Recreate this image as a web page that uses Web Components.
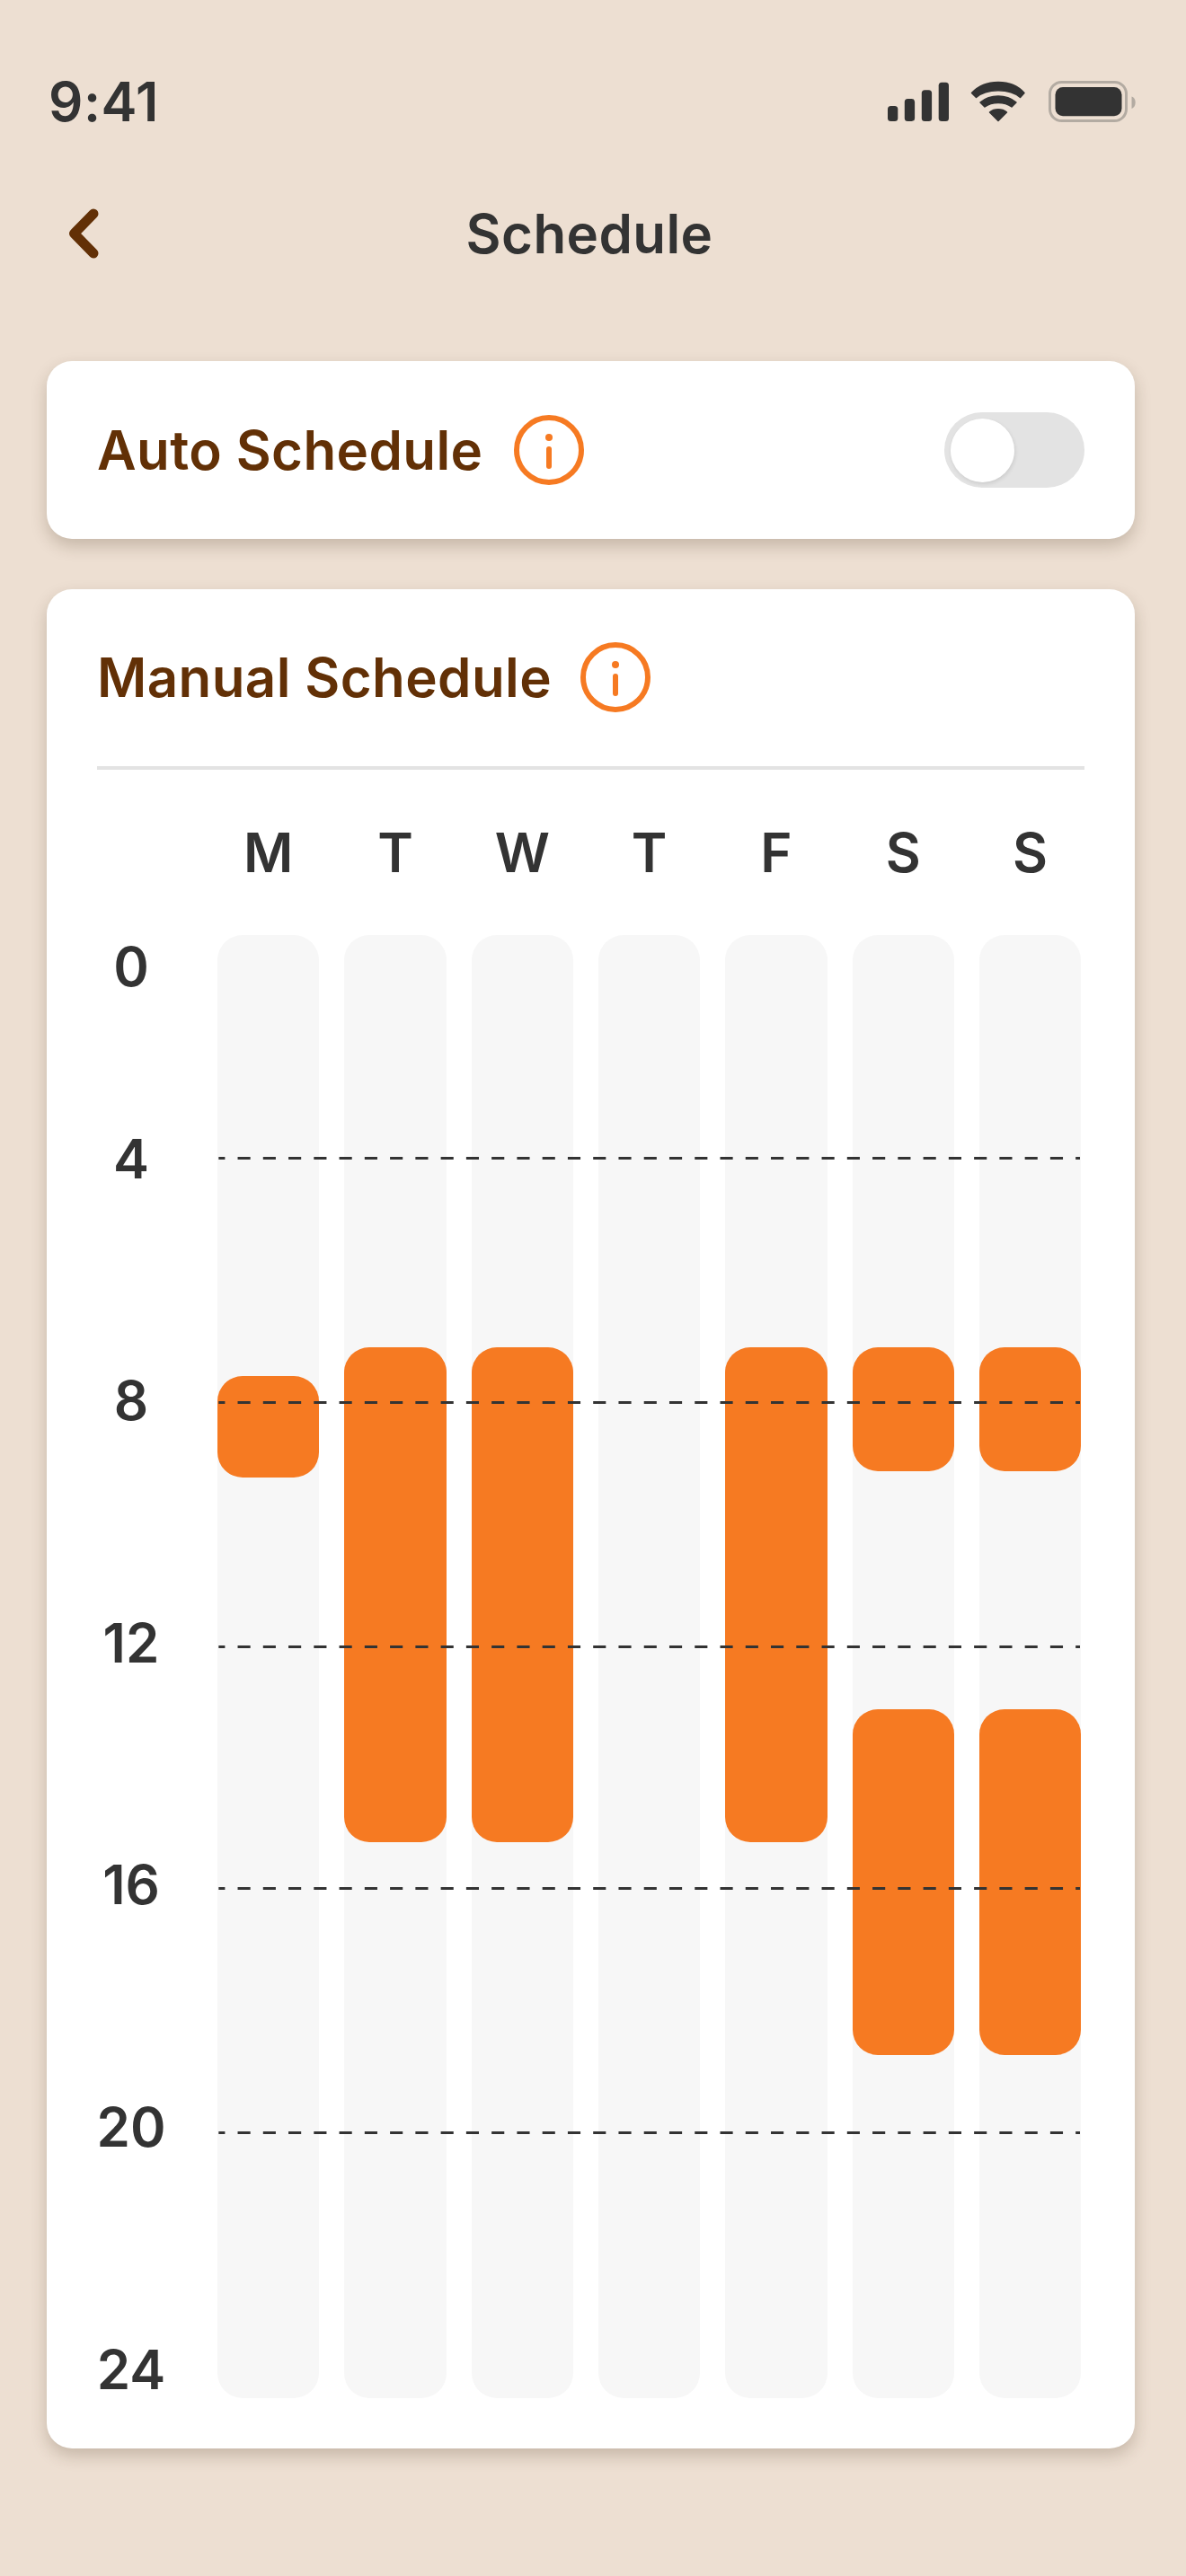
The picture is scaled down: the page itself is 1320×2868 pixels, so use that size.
<!DOCTYPE html>
<html lang="en">
<head>
<meta charset="utf-8">
<title>Schedule</title>
<style>
  html, body {
    margin: 0;
    background: #eddfd2;
  }
  body {
    width: 1320px;
    height: 2868px;
    overflow: hidden;
    color: #333333;
    font-family: Inter, "Liberation Sans", sans-serif;
    font-weight: 600;
    font-size: 60px;
  }
</style>
</head>
<body>
  <status-bar>9:41</status-bar>
  <nav-bar>Schedule</nav-bar>
  <schedule-page>
    <schedule-card>
      <auto-row>
        <card-title>Auto Schedule</card-title>
        <toggle-switch></toggle-switch>
      </auto-row>
    </schedule-card>
    <schedule-card>
      <manual-panel>
        <card-title slot="title" style="--title-gap: 32px">Manual Schedule</card-title>
        <day-label slot="days">M</day-label>
        <day-label slot="days">T</day-label>
        <day-label slot="days">W</day-label>
        <day-label slot="days">T</day-label>
        <day-label slot="days">F</day-label>
        <day-label slot="days">S</day-label>
        <day-label slot="days">S</day-label>
        <hour-label slot="hours" style="margin-bottom: -56px">0</hour-label>
        <hour-label slot="hours">4</hour-label>
        <hour-label slot="hours">8</hour-label>
        <hour-label slot="hours">12</hour-label>
        <hour-label slot="hours">16</hour-label>
        <hour-label slot="hours">20</hour-label>
        <hour-label slot="hours">24</hour-label>
        <day-track slot="tracks"><time-block offset="491" size="113"></time-block></day-track>
        <day-track slot="tracks"><time-block offset="459.33" size="551"></time-block></day-track>
        <day-track slot="tracks"><time-block offset="459.33" size="551"></time-block></day-track>
        <day-track slot="tracks"></day-track>
        <day-track slot="tracks"><time-block offset="459.33" size="551"></time-block></day-track>
        <day-track slot="tracks">
          <time-block offset="459.33" size="137.67"></time-block>
          <time-block offset="265.33" size="385"></time-block>
        </day-track>
        <day-track slot="tracks">
          <time-block offset="459.33" size="137.67"></time-block>
          <time-block offset="265.33" size="385"></time-block>
        </day-track>
        <dash-line slot="lines" at="247.3"></dash-line>
        <dash-line slot="lines" at="519.3"></dash-line>
        <dash-line slot="lines" at="791.3"></dash-line>
        <dash-line slot="lines" at="1060"></dash-line>
        <dash-line slot="lines" at="1332"></dash-line>
      </manual-panel>
    </schedule-card>
  </schedule-page>

<script>
  /**
   * Registers an element whose shadow root is cloned from the given markup.
   *
   * @param {string} name - The element's name.
   * @param {string} html - Styles and markup of the shadow root.
   * @param {Function} [setup] - Called with the element once it is connected.
   */
  function defineElement(name, html, setup) {
    const template = document.createElement('template')
    template.innerHTML = html

    customElements.define(
      name,
      class extends HTMLElement {
        constructor() {
          super()
          this.attachShadow({ mode: 'open' }).appendChild(template.content.cloneNode(true))
        }

        connectedCallback() {
          if (setup) setup(this)
        }
      }
    )
  }

  defineElement('status-bar', `
    <style>
      :host {
        display: flex;
        justify-content: space-between;
        align-items: center;
        box-sizing: border-box;
        height: 170px;
        padding: 90px 56px 35px 54px;
        letter-spacing: 0.5px;
      }
      .icons {
        display: flex;
        align-items: center;
        gap: 24px;
      }
      svg {
        display: block;
      }
    </style>
    <slot></slot>
    <div class="icons">
      <svg width="68" height="44" viewBox="0 0 68 44" fill="#333333">
        <rect x="0" y="27" width="11.3" height="17" rx="3.5"/>
        <rect x="18.8" y="19" width="11.3" height="25" rx="3.5"/>
        <rect x="37.8" y="9.3" width="11.3" height="34.7" rx="3.5"/>
        <rect x="56.7" y="0.7" width="11.3" height="43.3" rx="3.5"/>
      </svg>
      <svg width="62" height="46" viewBox="0 0 62 46" fill="#333333" stroke="#333333" stroke-width="1.5" stroke-linejoin="round">
        <path d="M1.5 13.5C9 5.5 19.5 1.5 31 1.5S53 5.5 60 13.5L55.5 18.5C49.5 13 41 10.7 31 10.7S12.5 13 6.5 18.5Z"/>
        <path d="M11 24C16.5 19.5 23 17 31 17S45.5 19.5 51 24L46 29C42 26 37 24.5 31 24.5S20 26 16 29Z"/>
        <path d="M21.5 35C24 32.8 27 31.7 31 31.7S38 32.8 40.5 35L31 44.5Z"/>
      </svg>
      <svg width="97" height="46" viewBox="0 0 97 46" style="margin-left: 1px">
        <rect x="1.5" y="1.5" width="85" height="43" rx="13" fill="none" stroke="#b3aba2" stroke-width="3"/>
        <rect x="7.5" y="7" width="74" height="32.3" rx="8.5" fill="#333333"/>
        <path d="M92.5 17.5C95 18 96.7 20.5 96.7 24S95 30 92.5 31Z" fill="#b3aba2"/>
      </svg>
    </div>
  `)

  defineElement('nav-bar', `
    <style>
      :host {
        display: flex;
        align-items: center;
        justify-content: center;
        position: relative;
        height: 180px;
        padding-right: 8px;
        font-weight: 560;
        letter-spacing: 0.4px;
      }
      svg {
        position: absolute;
        left: 74px;
        top: 60px;
      }
    </style>
    <svg width="40" height="60" viewBox="0 0 40 60" fill="none" stroke="#623006" stroke-width="11" stroke-linecap="round" stroke-linejoin="round">
      <path d="M30 8L8.5 30L30 52"/>
    </svg>
    <slot></slot>
  `)

  defineElement('schedule-page', `
    <style>
      :host {
        display: flex;
        flex-direction: column;
        gap: 56px;
        padding: 52px 57px 0 52px;
      }
    </style>
    <slot></slot>
  `)

  defineElement('schedule-card', `
    <style>
      :host {
        display: block;
        background: #ffffff;
        border-radius: 28px;
        box-shadow: 0 8px 18px rgba(60, 40, 20, 0.22);
      }
    </style>
    <slot></slot>
  `)

  defineElement('auto-row', `
    <style>
      :host {
        display: flex;
        justify-content: space-between;
        align-items: center;
        box-sizing: border-box;
        height: 198px;
        padding: 0 56px;
      }
    </style>
    <slot></slot>
  `)

  defineElement('card-title', `
    <style>
      :host {
        display: flex;
        align-items: center;
        gap: var(--title-gap, 35px);
        color: #623006;
        font-weight: 560;
        letter-spacing: 0.4px;
      }
      svg {
        display: block;
      }
    </style>
    <span><slot></slot></span>
    <svg width="78" height="78" viewBox="0 0 78 78" fill="none" stroke="#f67a22" stroke-linecap="round">
      <circle cx="39" cy="39" r="36" stroke-width="6"/>
      <path d="M39 38V57" stroke-width="6"/>
      <circle cx="39" cy="25" r="4" fill="#f67a22" stroke="none"/>
    </svg>
  `)

  defineElement('toggle-switch', `
    <style>
      :host {
        display: block;
        box-sizing: border-box;
        width: 156px;
        height: 84px;
        padding: 6.5px 7px;
        border-radius: 42px;
        background: #e3e3e3;
      }
      div {
        width: 71px;
        height: 71px;
        border-radius: 50%;
        background: #ffffff;
        box-shadow: 1px 2px 4px rgba(0, 0, 0, 0.1);
      }
    </style>
    <div></div>
  `)

  defineElement('manual-panel', `
    <style>
      :host {
        display: block;
        padding: 59px 56px 56.3px;
      }
      .rule {
        height: 4px;
        margin-top: 60px;
        background: #e3e3e3;
      }
      .grid {
        display: grid;
        grid-template-columns: 134px 1fr;
        position: relative;
        height: 1629px;
      }
      .head {
        display: grid;
        grid-template-columns: 134px 1fr;
        margin: 61.5px 0 62.17px;
      }
      .row {
        display: grid;
        grid-template-columns: repeat(7, 113.33px);
        column-gap: 28px;
      }
      .hours {
        display: flex;
        flex-direction: column;
        align-items: center;
        gap: 225.6px;
        width: 76px;
        padding-top: 13.3px;
      }
      .lines {
        position: absolute;
        left: 134px;
        top: 0;
      }
    </style>
    <slot name="title"></slot>
    <div class="rule"></div>
    <div class="head">
      <div></div>
      <div class="row"><slot name="days"></slot></div>
    </div>
    <div class="grid">
      <div class="hours"><slot name="hours"></slot></div>
      <div class="row"><slot name="tracks"></slot></div>
      <div class="lines"><slot name="lines"></slot></div>
    </div>
  `)

  defineElement('day-label', `
    <style>
      :host {
        display: block;
        height: 60px;
        line-height: 60px;
        text-align: center;
        font-weight: 560;
      }
    </style>
    <slot></slot>
  `)

  defineElement('hour-label', `
    <style>
      :host {
        display: block;
        height: 44px;
        line-height: 44px;
        text-align: center;
      }
    </style>
    <slot></slot>
  `)

  defineElement('day-track', `
    <style>
      :host {
        display: flex;
        flex-direction: column;
        height: 1629px;
        border-radius: 28px;
        background: #f7f7f7;
      }
    </style>
    <slot></slot>
  `)

  defineElement('time-block', `
    <style>
      :host {
        display: block;
        flex: none;
        border-radius: 28px;
        background: #f67a22;
      }
    </style>
  `, (el) => {
    el.style.marginTop = `${el.getAttribute('offset')}px`
    el.style.height = `${el.getAttribute('size')}px`
  })

  defineElement('dash-line', `
    <style>
      :host {
        display: block;
        position: absolute;
        left: 0;
        width: 961.33px;
        height: 3.4px;
      }
      svg {
        display: block;
      }
    </style>
    <svg width="961.33" height="3.4" viewBox="0 0 961.33 3.4">
      <line x1="0" y1="1.7" x2="961.33" y2="1.7" stroke="#333333" stroke-width="3.4" stroke-dasharray="14.17 14.17" stroke-dashoffset="7.08"/>
    </svg>
  `, (el) => {
    el.style.top = `${el.getAttribute('at')}px`
  })
</script>
</body>
</html>
